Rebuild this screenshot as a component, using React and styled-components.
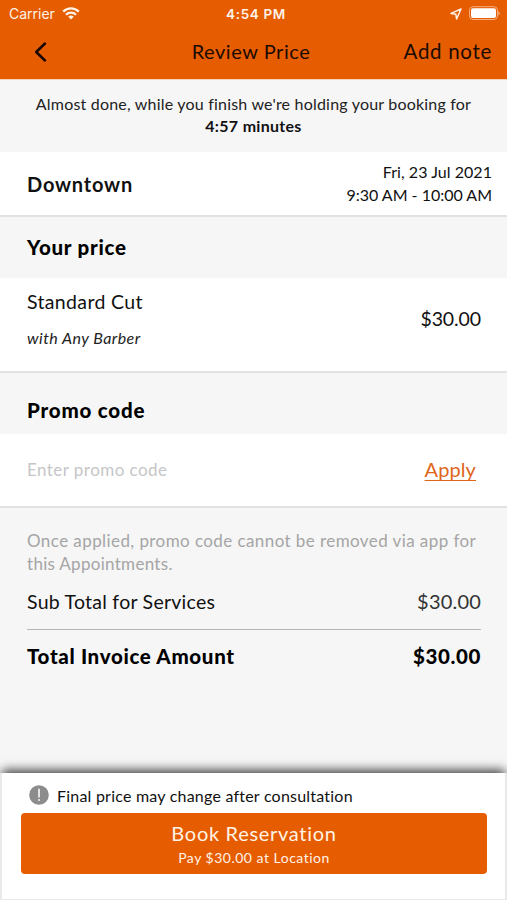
import React from "react";
import styled, { createGlobalStyle } from "styled-components";

const GlobalStyle = createGlobalStyle`
  * {
    box-sizing: border-box;
  }

  body {
    margin: 0;
    background-color: #f6f6f6;
    font-family: Lato, "Liberation Sans", sans-serif;
    color: #111;
  }
`;

const Screen = styled.div`
  display: flex;
  flex-direction: column;
  height: 900px;
  overflow: hidden;
`;

const Header = styled.header`
  height: 80px;
  background-color: #e65c00;
  border-bottom: 1px solid #f9d3b8;
`;

const StatusBar = styled.div`
  display: grid;
  grid-template-columns: 1fr auto 1fr;
  align-items: center;
  height: 27px;
  padding: 0 7px 0 9px;
  color: #fff3e8;
  font-family: Inter, sans-serif;
`;

const StatusGroup = styled.div`
  display: flex;
  align-items: center;
  justify-content: ${({ $end }) => ($end ? "flex-end" : "flex-start")};
  gap: 7px;
`;

const Clock = styled.div`
  padding-left: 3px;
`;

const NavBar = styled.div`
  display: grid;
  grid-template-columns: 98px 1fr 121px;
  align-items: center;
  height: 49px;
  padding: 0 15px 0 33px;
`;

const BackButton = styled.button`
  display: flex;
  width: 16px;
  padding: 1px 0 0;
  border: 0;
  background: none;
`;

const NavAction = styled.div`
  display: flex;
  justify-content: flex-end;
  padding-bottom: 1px;
`;

const NavTitle = styled.div`
  padding-bottom: 2px;
  text-align: center;
`;

const Text = styled.span`
  display: block;
  font-size: ${({ $size }) => $size}px;
  font-weight: ${({ $weight }) => $weight || 400};
  font-style: ${({ $italic }) => ($italic ? "italic" : "normal")};
  letter-spacing: ${({ $spacing }) => $spacing || 0}px;
  line-height: ${({ $line }) => ($line ? `${$line}px` : "normal")};
  color: ${({ $color }) => $color || "inherit"};
  white-space: nowrap;
`;

const Notice = styled.div`
  height: 72px;
  padding-top: 13px;
  text-align: center;
`;

const Row = styled.section`
  display: flex;
  align-items: center;
  justify-content: space-between;
  height: ${({ $height }) => $height}px;
  padding: 0 ${({ $right }) => $right}px 0 27px;
  background-color: #fff;
  border-bottom: 2px solid #e2e2e2;
`;

const Schedule = styled.div`
  padding-bottom: 2px;
  text-align: right;
`;

const SectionTitle = styled.h2`
  display: flex;
  align-items: center;
  height: ${({ $height }) => $height}px;
  margin: 0;
  padding: ${({ $top }) => $top || 0}px 27px 2px;
`;

const Service = styled.div`
  display: flex;
  flex-direction: column;
  gap: 12px;
  padding-bottom: 10px;
`;

const Price = styled.div`
  padding-bottom: 13px;
`;

const PromoField = styled.div`
  padding-bottom: 2px;
`;

const ApplyLink = styled.button`
  padding: 0 0 2px;
  border: 0;
  background: none;
  color: #e0661a;
  font-family: inherit;
  text-decoration: underline;
  text-decoration-thickness: 1px;
  text-underline-offset: 3px;
`;

const Summary = styled.section`
  flex: 1;
  padding: 21px 26px 0 27px;
`;

const SummaryLine = styled.div`
  display: flex;
  align-items: center;
  justify-content: space-between;
  height: ${({ $divided }) => ($divided ? 55 : 52)}px;
  padding-bottom: ${({ $divided }) => ($divided ? 2 : 0)}px;
  border-bottom: ${({ $divided }) => ($divided ? "1px solid #b5b5b5" : "0")};
`;

const Footer = styled.footer`
  height: 127px;
  padding: 10px 18px 0 19px;
  background-color: #fff;
  border: solid #e9e9e9;
  border-width: 0 2px 1px;
  box-shadow: 0 -5px 10px -2px rgba(0, 0, 0, 0.75);
`;

const FooterNote = styled.div`
  display: flex;
  align-items: center;
  gap: 7px;
  height: 25px;
  padding: 0 0 1px 7px;
`;

const BookButton = styled.button`
  display: flex;
  flex-direction: column;
  align-items: center;
  width: 100%;
  height: 61px;
  margin-top: 5px;
  padding: 8px 0 0;
  border: 0;
  border-radius: 4px;
  background-color: #e65c00;
  color: #fff3e5;
  font-family: inherit;
`;

const WifiIcon = () => (
  <svg width="18" height="13" viewBox="0 0 18 13" fill="none" stroke="currentColor" strokeWidth="2.3">
    <path d="M1.2 4.6a11 11 0 0 1 15.6 0" />
    <path d="M4 7.7a7 7 0 0 1 10 0" />
    <path d="M9 12.6 6.2 9.8a4 4 0 0 1 5.6 0z" fill="currentColor" stroke="none" />
  </svg>
);

const LocationIcon = () => (
  <svg width="12" height="12" viewBox="0 0 12 12" fill="none" stroke="currentColor" strokeWidth="1.5" strokeLinejoin="round">
    <path d="M11 1 1 5.4l4.8.8.8 4.8z" />
  </svg>
);

const BatteryIcon = () => (
  <svg width="31" height="15" viewBox="0 0 31 15">
    <rect x="0.5" y="0.7" width="28" height="12.8" rx="3.6" fill="none" stroke="#f6ae80" strokeWidth="1" />
    <rect x="2" y="2.2" width="25" height="9.8" rx="2" fill="#fff" />
    <path d="M29.4 5v4.4q1.4-.8 1.4-2.2T29.4 5z" fill="#f6ae80" />
  </svg>
);

const ChevronIcon = () => (
  <svg width="14" height="22" viewBox="0 0 14 22" fill="none" stroke="#160800" strokeWidth="2.5" strokeLinecap="round" strokeLinejoin="round">
    <path d="M12 2.5 3.2 11l8.8 8.5" />
  </svg>
);

const AlertIcon = () => (
  <svg width="22" height="20" viewBox="0 0 22 20">
    <circle cx="11" cy="10" r="9.8" fill="#8c8c8c" />
    <path d="M11 4.5v7.3" stroke="#eee" strokeWidth="1.8" strokeLinecap="round" />
    <circle cx="11" cy="15" r="1.1" fill="#eee" />
  </svg>
);

function App() {
  return (
    <Screen>
      <GlobalStyle />
      <Header>
        <StatusBar>
          <StatusGroup>
            <Text $size={14}>Carrier</Text>
            <WifiIcon />
          </StatusGroup>
          <Clock>
            <Text $size={13.5} $weight={600} $spacing={0.65}>4:54 PM</Text>
          </Clock>
          <StatusGroup $end>
            <LocationIcon />
            <BatteryIcon />
          </StatusGroup>
        </StatusBar>
        <NavBar>
          <BackButton aria-label="Back">
            <ChevronIcon />
          </BackButton>
          <NavTitle>
            <Text $size={20} $spacing={0.55} $color="#1c0b00">Review Price</Text>
          </NavTitle>
          <NavAction>
            <Text $size={20.5} $spacing={0.7} $color="#1c0b00">Add note</Text>
          </NavAction>
        </NavBar>
      </Header>

      <Notice>
        <Text $size={16} $line={22} $spacing={0.2} $color="#222">
          Almost done, while you finish we're holding your booking for
        </Text>
        <Text $size={16} $line={22} $weight={700} $spacing={0.3}>4:57 minutes</Text>
      </Notice>

      <Row $height={65} $right={15}>
        <Text $size={20} $weight={700} $spacing={0.8}>Downtown</Text>
        <Schedule>
          <Text $size={16} $line={23} $spacing={0.05}>Fri, 23 Jul 2021</Text>
          <Text $size={16} $line={23}>9:30 AM - 10:00 AM</Text>
        </Schedule>
      </Row>

      <SectionTitle $height={61}>
        <Text $size={20.5} $weight={900} $spacing={0.75} $color="#000">Your price</Text>
      </SectionTitle>
      <Row $height={95} $right={26}>
        <Service>
          <Text $size={19.5} $line={24} $spacing={0.35}>Standard Cut</Text>
          <Text $size={16} $line={24} $spacing={0.45} $italic $color="#222">with Any Barber</Text>
        </Service>
        <Price>
          <Text $size={19.5} $spacing={-0.1}>$30.00</Text>
        </Price>
      </Row>

      <SectionTitle $height={61} $top={14}>
        <Text $size={20.5} $weight={900} $spacing={0.8} $color="#000">Promo code</Text>
      </SectionTitle>
      <Row $height={74} $right={31}>
        <PromoField>
          <Text $size={17} $spacing={0.45} $color="#c6c6c8">Enter promo code</Text>
        </PromoField>
        <ApplyLink>
          <Text $size={20} $spacing={0.1}>Apply</Text>
        </ApplyLink>
      </Row>

      <Summary>
        <Text $size={17} $line={23} $spacing={0.42} $color="#a5a5a5">
          Once applied, promo code cannot be removed via app for
        </Text>
        <Text $size={17} $line={23} $spacing={0.3} $color="#a5a5a5">this Appointments.</Text>
        <SummaryLine $divided>
          <Text $size={19.5} $spacing={0.25}>Sub Total for Services</Text>
          <Text $size={20} $spacing={0.2} $color="#333">$30.00</Text>
        </SummaryLine>
        <SummaryLine>
          <Text $size={20.5} $weight={900} $spacing={0.67} $color="#000">Total Invoice Amount</Text>
          <Text $size={20.5} $weight={900} $spacing={0.6} $color="#000">$30.00</Text>
        </SummaryLine>
      </Summary>

      <Footer>
        <FooterNote>
          <AlertIcon />
          <Text $size={16} $spacing={0.22}>Final price may change after consultation</Text>
        </FooterNote>
        <BookButton>
          <Text $size={20} $line={25} $spacing={0.7}>Book Reservation</Text>
          <Text $size={14} $line={23} $spacing={0.5}>Pay $30.00 at Location</Text>
        </BookButton>
      </Footer>
    </Screen>
  );
}

export default App;
